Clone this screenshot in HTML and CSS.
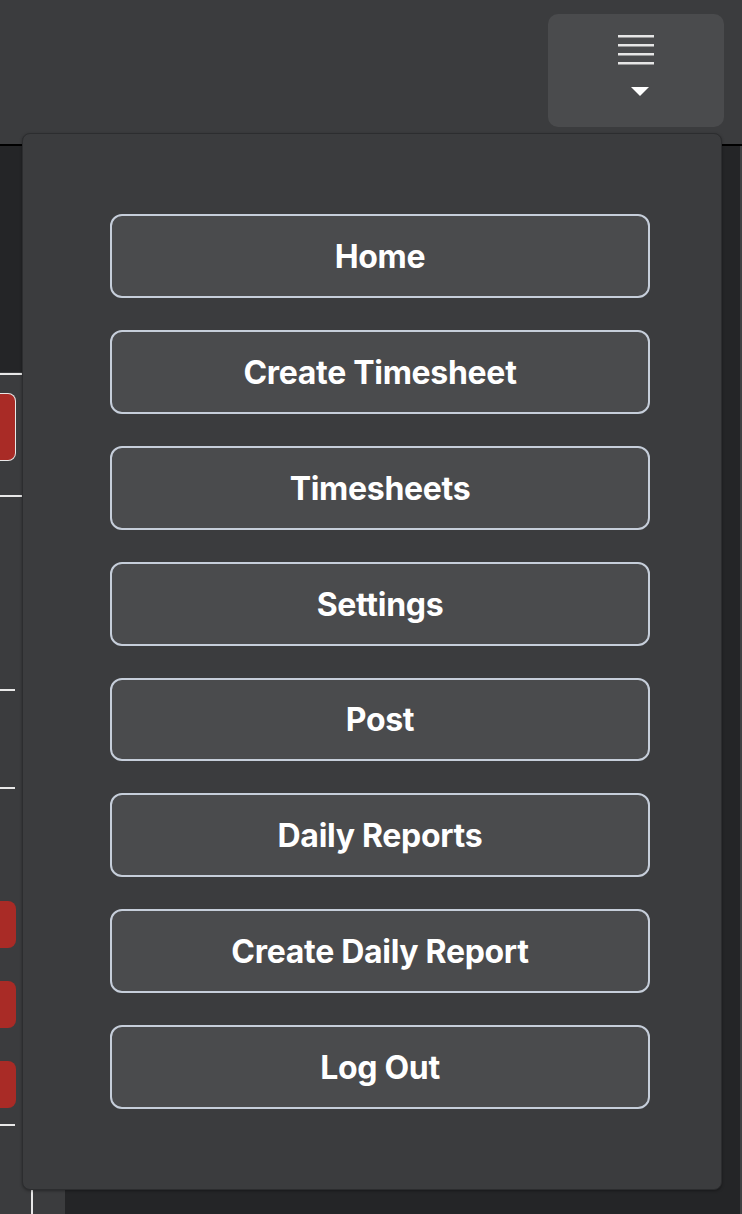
FILE: index.html
```html
<!DOCTYPE html>
<html lang="en">
<head>
<meta charset="utf-8">
<title>Menu</title>
<link rel="stylesheet" href="styles.css">
</head>
<body>
<div class="page">
  <header class="topbar">
    <button class="menu-toggle" aria-label="Menu">
      <svg class="menu-icon" width="176" height="113" viewBox="0 0 176 113">
        <g fill="#e6e6e6">
          <rect x="70" y="21" width="36" height="2.5"/>
          <rect x="70" y="30" width="36" height="2.5"/>
          <rect x="70" y="39" width="36" height="2.5"/>
          <rect x="70" y="48" width="36" height="2.5"/>
        </g>
        <polygon points="83,73 101,73 92,82" fill="#ffffff"/>
      </svg>
    </button>
  </header>
  <div class="body-area">
    <aside class="side">
      <div class="side-top"></div>
      <div class="side-main">
        <div class="rule rule-wide"></div>
        <div class="red-btn outlined"></div>
        <div class="rule rule-wide r2"></div>
        <div class="rule r3"></div>
        <div class="rule r4"></div>
        <div class="red-btn small r5"></div>
        <div class="red-btn small r6"></div>
        <div class="red-btn small r6"></div>
        <div class="rule r7"></div>
        <div class="vline"></div>
      </div>
    </aside>
    <main class="content"></main>
    <div class="edge"></div>
  </div>

  <nav class="dropdown">
    <a class="nav-btn" href="#">Home</a>
    <a class="nav-btn" href="#">Create Timesheet</a>
    <a class="nav-btn" href="#">Timesheets</a>
    <a class="nav-btn" href="#">Settings</a>
    <a class="nav-btn" href="#">Post</a>
    <a class="nav-btn" href="#">Daily Reports</a>
    <a class="nav-btn" href="#">Create Daily Report</a>
    <a class="nav-btn" href="#">Log Out</a>
  </nav>
</div>
</body>
</html>
```

FILE: styles.css
```css
* { box-sizing: border-box; }
html, body {
  margin: 0;
  padding: 0;
  background: #242527;
  font-family: Inter, "Helvetica Neue", Arial, sans-serif;
}
.page {
  position: relative;
  width: 742px;
  height: 1214px;
  overflow: hidden;
}
.topbar {
  height: 146px;
  background: #3b3c3e;
  border-bottom: 2px solid #000;
  display: flex;
  justify-content: flex-end;
  align-items: flex-start;
  padding: 14px 18px 0 0;
}
.menu-toggle {
  width: 176px;
  height: 113px;
  border: none;
  border-radius: 10px;
  background: #4a4b4d;
  padding: 0;
  display: block;
}
.menu-icon { display: block; }

.body-area {
  display: flex;
  height: 1068px;
}
.side {
  width: 65px;
  display: flex;
  flex-direction: column;
}
.side-top {
  height: 226px;
  background: #242527;
}
.side-main {
  flex: 1;
  background: #3b3c3e;
  display: flex;
  flex-direction: column;
  padding-top: 1px;
}
.rule {
  height: 2px;
  width: 15px;
  background: #e8e8e8;
}
.rule-wide { width: 22px; }
.red-btn {
  width: 16px;
  background: #a92b26;
  border-radius: 0 8px 8px 0;
}
.red-btn.outlined {
  height: 68px;
  margin-top: 18px;
  border: 1.5px solid #e8e8e8;
  border-left: none;
}
.red-btn.small { height: 47px; }
.r2 { margin-top: 34px; }
.r3 { margin-top: 192px; }
.r4 { margin-top: 96px; }
.r5 { margin-top: 112px; }
.r6 { margin-top: 33px; }
.r7 { margin-top: 16px; }
.vline {
  margin-left: 31px;
  width: 2px;
  flex: 1;
  margin-top: 10px;
  background: #e8e8e8;
}
.content { flex: 1; background: #242527; }
.edge { width: 2px; background: #3f4042; }

.dropdown {
  position: absolute;
  left: 22px;
  top: 133px;
  width: 700px;
  height: 1057px;
  background: #3b3c3e;
  border: 1px solid #2c2d2f;
  border-radius: 8px;
  box-shadow: 0 1px 3px rgba(0,0,0,0.35);
  padding: 80px 71px 80px 87px;
  display: flex;
  flex-direction: column;
  gap: 32px;
}
.nav-btn {
  display: flex;
  align-items: center;
  justify-content: center;
  height: 84px;
  background: #4a4b4d;
  border: 2px solid #c6ceda;
  border-radius: 12px;
  color: #ffffff;
  text-decoration: none;
  font-weight: 700;
  font-size: 32px;
  letter-spacing: -0.3px;
  padding-top: 1px;
}
```
